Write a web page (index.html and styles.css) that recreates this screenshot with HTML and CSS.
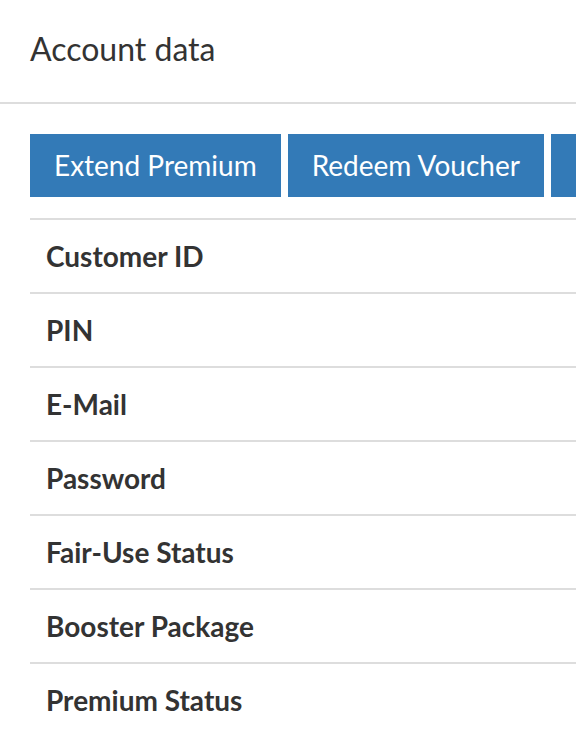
FILE: index.html
```html
<!DOCTYPE html>
<html lang="en">
<head>
    <meta charset="UTF-8">
    <meta name="viewport" content="width=device-width, initial-scale=1.0">
    <title>Account data</title>
    <link rel="stylesheet" href="styles.css">
</head>
<body>
    <div class="page-header">
        <h1>Account data</h1>
    </div>
    <div class="content">
        <div class="actions">
            <button type="button" class="btn">Extend Premium</button>
            <button type="button" class="btn">Redeem Voucher</button>
            <button type="button" class="btn btn-more" aria-label="More actions"></button>
        </div>
        <table class="account-table">
            <tbody>
                <tr><th>Customer ID</th><td></td></tr>
                <tr><th>PIN</th><td></td></tr>
                <tr><th>E-Mail</th><td></td></tr>
                <tr><th>Password</th><td></td></tr>
                <tr><th>Fair-Use Status</th><td></td></tr>
                <tr><th>Booster Package</th><td></td></tr>
                <tr><th>Premium Status</th><td></td></tr>
            </tbody>
        </table>
    </div>
</body>
</html>
```

FILE: styles.css
```css
html, body {
    overflow: hidden;
}
body {
    font-family: Lato, 'Open Sans', Arial, sans-serif;
    margin: 0;
    color: #333;
    background-color: white;
}
.page-header {
    padding: 29px 30px 33px;
    border-bottom: 2px solid #ddd;
}
h1 {
    margin: 0;
    font-size: 32px;
    font-weight: normal;
    line-height: 40px;
}
.content {
    padding: 30px 0 0 30px;
}
.actions {
    display: flex;
    gap: 7px;
    white-space: nowrap;
    margin-bottom: 21px;
}
.btn {
    flex: none;
    background-color: #337ab7;
    color: white;
    border: none;
    border-radius: 0;
    padding: 11px 24px 12px;
    font-family: inherit;
    font-size: 28px;
    line-height: 40px;
    cursor: pointer;
}
.btn:hover {
    background-color: #286090;
}
.btn-more {
    width: 200px;
    height: 63px;
}
.account-table {
    width: 100%;
    border-collapse: collapse;
}
.account-table th,
.account-table td {
    border-top: 2px solid #ddd;
    padding: 16px;
    font-size: 28px;
    line-height: 40px;
    text-align: left;
}
.account-table th {
    font-weight: bold;
    white-space: nowrap;
    width: 1%;
}
```
